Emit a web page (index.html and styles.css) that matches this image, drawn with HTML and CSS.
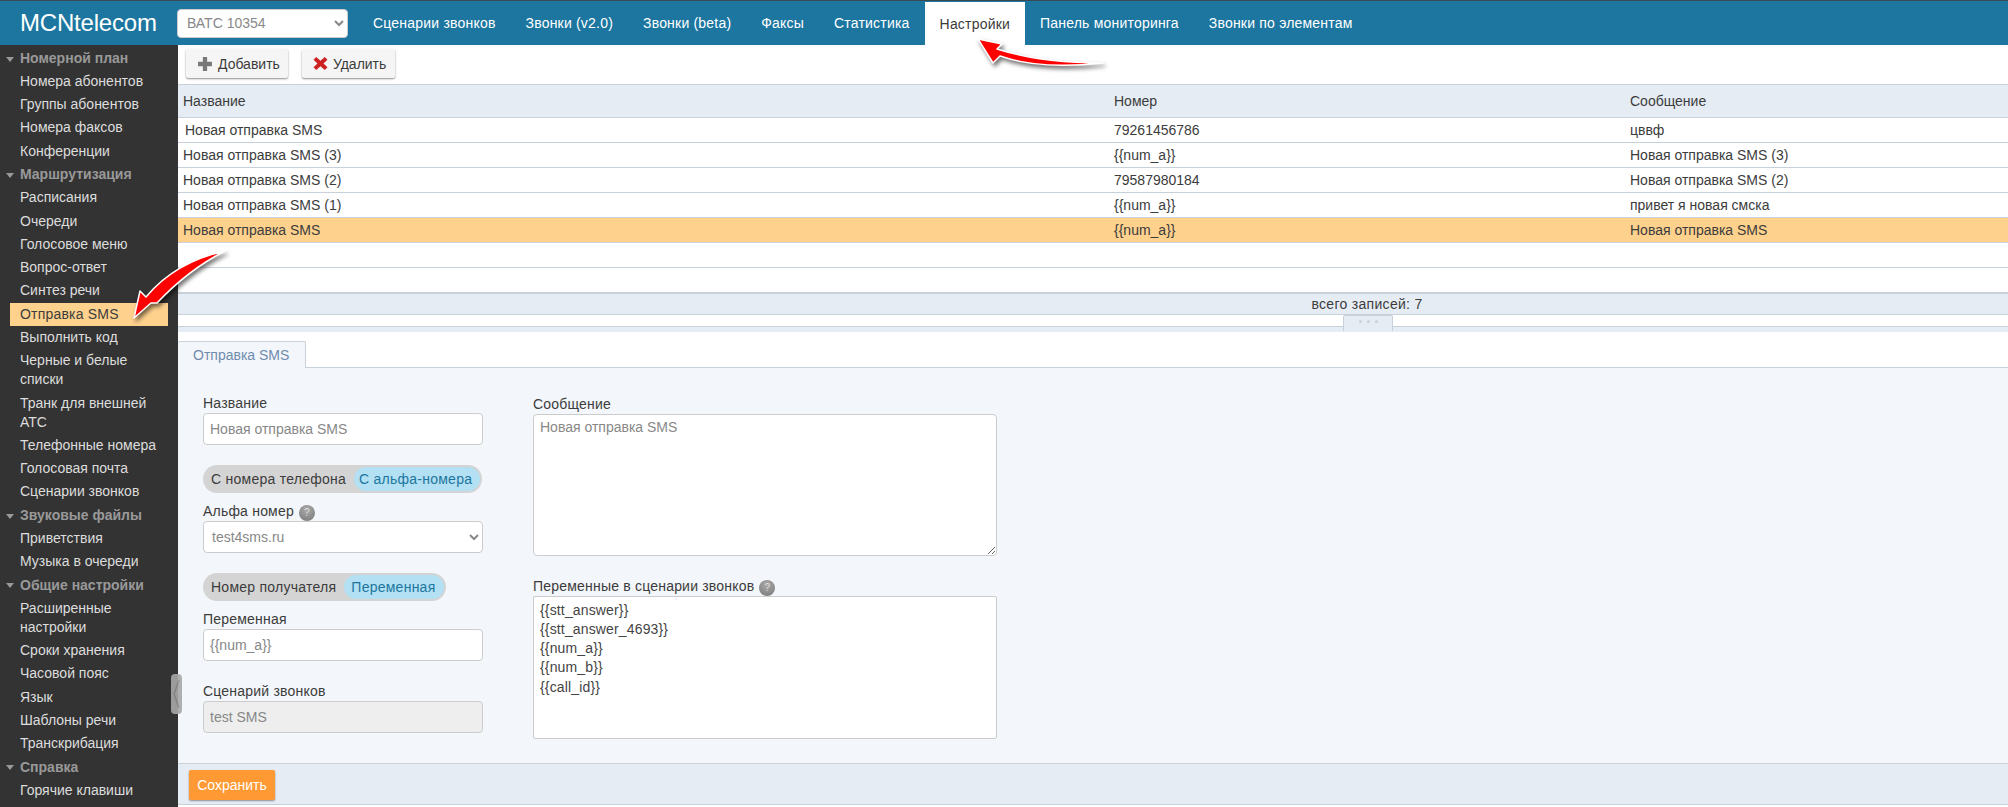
FILE: index.html
```html
<!DOCTYPE html>
<html lang="en">
<head>
    <meta charset="UTF-8">
    <meta name="viewport" content="width=device-width, initial-scale=1.0">
    <title>MCNtelecom</title>
    <link rel="stylesheet" href="styles.css">
</head>
<body>
    <header class="topbar">
        <div class="logo">MCNtelecom</div>
        <select class="account-select">
            <option>ВАТС 10354</option>
        </select>
        <nav class="topnav">
            <a class="topnav-item">Сценарии звонков</a>
            <a class="topnav-item">Звонки (v2.0)</a>
            <a class="topnav-item">Звонки (beta)</a>
            <a class="topnav-item">Факсы</a>
            <a class="topnav-item">Статистика</a>
            <a class="topnav-item active">Настройки</a>
            <a class="topnav-item">Панель мониторинга</a>
            <a class="topnav-item">Звонки по элементам</a>
        </nav>
    </header>

    <div class="main">
        <aside class="sidebar">
            <div class="side-group">Номерной план</div>
            <a class="side-item">Номера абонентов</a>
            <a class="side-item">Группы абонентов</a>
            <a class="side-item">Номера факсов</a>
            <a class="side-item">Конференции</a>
            <div class="side-group">Маршрутизация</div>
            <a class="side-item">Расписания</a>
            <a class="side-item">Очереди</a>
            <a class="side-item">Голосовое меню</a>
            <a class="side-item">Вопрос-ответ</a>
            <a class="side-item">Синтез речи</a>
            <a class="side-item selected">Отправка SMS</a>
            <a class="side-item">Выполнить код</a>
            <a class="side-item">Черные и белые списки</a>
            <a class="side-item">Транк для внешней АТС</a>
            <a class="side-item">Телефонные номера</a>
            <a class="side-item">Голосовая почта</a>
            <a class="side-item">Сценарии звонков</a>
            <div class="side-group">Звуковые файлы</div>
            <a class="side-item">Приветствия</a>
            <a class="side-item">Музыка в очереди</a>
            <div class="side-group">Общие настройки</div>
            <a class="side-item">Расширенные настройки</a>
            <a class="side-item">Сроки хранения</a>
            <a class="side-item">Часовой пояс</a>
            <a class="side-item">Язык</a>
            <a class="side-item">Шаблоны речи</a>
            <a class="side-item">Транскрибация</a>
            <div class="side-group">Справка</div>
            <a class="side-item">Горячие клавиши</a>
        </aside>

        <div class="collapse-handle">
            <svg width="11" height="40" viewBox="0 0 11 40">
                <path d="M8 6 L3 20 L8 34" fill="none" stroke="#8d8d8d" stroke-width="1.5"/>
            </svg>
        </div>

        <section class="content">
            <div class="toolbar">
                <button class="tool-btn add-btn">
                    <svg width="16" height="16" viewBox="0 0 15 15">
                        <path d="M5.5 1h4v4.500H14v4H9.500V14h-4V9.500H1v-4h4.500z" fill="#777"/>
                    </svg>
                    Добавить
                </button>
                <button class="tool-btn">
                    <svg width="15" height="15" viewBox="0 0 14 14">
                        <path d="M3 1 L7 4.500 L11 1 L13.500 3.500 L9.800 7 L13.500 10.500 L11 13 L7 9.500 L3 13 L0.500 10.500 L4.200 7 L0.500 3.500z" fill="#cc2222"/>
                    </svg>
                    Удалить
                </button>
            </div>

            <table class="grid">
                <thead>
                    <tr>
                        <th class="col-name">Название</th>
                        <th class="col-number">Номер</th>
                        <th>Сообщение</th>
                    </tr>
                </thead>
                <tbody>
                    <tr><td class="first-name">Новая отправка SMS</td><td>79261456786</td><td>цввф</td></tr>
                    <tr><td>Новая отправка SMS (3)</td><td>{{num_a}}</td><td>Новая отправка SMS (3)</td></tr>
                    <tr><td>Новая отправка SMS (2)</td><td>79587980184</td><td>Новая отправка SMS (2)</td></tr>
                    <tr><td>Новая отправка SMS (1)</td><td>{{num_a}}</td><td>привет я новая смска</td></tr>
                    <tr class="current"><td>Новая отправка SMS</td><td>{{num_a}}</td><td>Новая отправка SMS</td></tr>
                    <tr><td></td><td></td><td></td></tr>
                    <tr class="last"><td></td><td></td><td></td></tr>
                </tbody>
            </table>

            <div class="grid-footer">всего записей: 7</div>

            <div class="splitter">
                <div class="splitter-grip"><span></span><span></span><span></span></div>
            </div>

            <div class="tabs">
                <div class="tab">Отправка SMS</div>
            </div>

            <div class="detail">
                <div class="form-col left-col">
                    <label class="field-label">Название</label>
                    <input class="field" type="text" value="Новая отправка SMS">

                    <div class="toggle first-toggle">
                        <span class="toggle-off">С номера телефона</span>
                        <span class="toggle-on">С альфа-номера</span>
                    </div>
                    <label class="field-label">Альфа номер <i class="help">?</i></label>
                    <select class="field select-field">
                        <option>test4sms.ru</option>
                    </select>

                    <div class="toggle second-toggle">
                        <span class="toggle-off">Номер получателя</span>
                        <span class="toggle-on">Переменная</span>
                    </div>
                    <label class="field-label">Переменная</label>
                    <input class="field" type="text" value="{{num_a}}">

                    <label class="field-label spaced">Сценарий звонков</label>
                    <input class="field" type="text" value="test SMS" disabled>
                </div>

                <div class="form-col right-col">
                    <label class="field-label">Сообщение</label>
                    <textarea class="field message">Новая отправка SMS</textarea>
                    <label class="field-label spaced">Переменные в сценарии звонков <i class="help">?</i></label>
                    <textarea class="field variables">{{stt_answer}}
{{stt_answer_4693}}
{{num_a}}
{{num_b}}
{{call_id}}</textarea>
                </div>
            </div>

            <div class="form-footer">
                <button class="save-btn">Сохранить</button>
            </div>
        </section>
    </div>

    <!-- red callout arrows -->
    <svg class="callouts" width="2008" height="807" viewBox="0 0 2008 807">
        <path d="M978 39 L1002 44 L997 49 Q1040 63 1103 63 Q1040 70 1000 56 L993 63 Z"/>
        <path d="M134 318 L140 291 L146 297 Q175 262 225 251 Q188 270 157 303 L151 303 Z"/>
    </svg>
</body>
</html>
```

FILE: styles.css
```css
* {
    box-sizing: border-box;
}
html, body {
    height: 100%;
}
body {
    margin: 0;
    padding: 0;
    overflow: hidden;
    font-family: "Liberation Sans", Arial, sans-serif;
    font-size: 14px;
    color: #3c3c3c;
    background-color: #fff;
}

/* Top bar */
.topbar {
    display: flex;
    align-items: center;
    height: 45px;
    padding-left: 20px;
    background-color: #1c76a0;
    border-top: 1px solid #3b4a52;
}
.logo {
    width: 157px;
    font-size: 24px;
    color: #fff;
    letter-spacing: -0.2px;
}
.account-select {
    width: 171px;
    height: 29px;
    padding-left: 5px;
    margin-right: 10px;
    font-family: inherit;
    font-size: 14px;
    color: #888;
    background-color: #fff;
    border: 1px solid #ccc;
    border-radius: 4px;
}
.topnav {
    display: flex;
    align-self: stretch;
}
.topnav-item {
    display: flex;
    align-items: center;
    padding: 0 15px;
    color: #fff;
    letter-spacing: 0.2px;
}
.topnav-item.active {
    margin-top: 1px;
    color: #3c3c3c;
    background-color: #fff;
}

/* Layout */
.main {
    position: relative;
    display: flex;
    height: 762px;
}
.sidebar {
    width: 178px;
    flex-shrink: 0;
    padding-top: 1.500px;
    background-color: #333;
    overflow: hidden;
}
.side-group {
    position: relative;
    padding: 2.150px 0 2.150px 20px;
    line-height: 19px;
    font-weight: bold;
    color: #999;
}
.side-group::before {
    content: "";
    position: absolute;
    left: 6px;
    top: 10px;
    border-left: 4px solid transparent;
    border-right: 4px solid transparent;
    border-top: 5px solid #999;
}
.side-item {
    display: block;
    margin: 0 10px;
    padding: 2.150px 0 2.150px 10px;
    line-height: 19px;
    color: #ddd;
}
.side-item.selected {
    letter-spacing: 0.2px;
    color: #3c3c3c;
    background-color: #fed18d;
}
.collapse-handle {
    position: absolute;
    left: 171px;
    top: 629px;
    width: 11px;
    height: 40px;
    background-color: #a8a8a8;
    border-radius: 4px;
    opacity: 0.9;
}
.collapse-handle svg {
    display: block;
}

/* Content */
.content {
    flex: 1;
    min-width: 0;
}
.toolbar {
    display: flex;
    gap: 14px;
    height: 39px;
    padding: 4px 0 0 8px;
}
.tool-btn {
    display: flex;
    align-items: center;
    gap: 5px;
    height: 29px;
    padding: 0 9px 0 11px;
    font-family: inherit;
    font-size: 14px;
    color: #3c3c3c;
    background-color: #f5f5f5;
    border: none;
    border-radius: 2px;
    box-shadow: 0 1px 2px rgba(0, 0, 0, 0.45);
}
.add-btn {
    padding-right: 8px;
}

/* Grid */
.grid {
    width: 100%;
    table-layout: fixed;
    border-collapse: collapse;
}
.grid th {
    height: 33px;
    padding: 0 5px;
    font-weight: normal;
    text-align: left;
    background-color: #e6ecf4;
    border-top: 1px solid #c8d0da;
    border-bottom: 1px solid #c8d0da;
}
.grid td {
    height: 25px;
    padding: 0 5px;
    border-bottom: 1px solid #c8d0da;
}
.grid .first-name {
    padding-left: 7px;
}
.col-name {
    width: 931px;
}
.col-number {
    width: 516px;
}
.grid .current td {
    background-color: #fed18d;
}
.grid .last td {
    border-bottom: 2px solid #c8d0da;
}
.grid-footer {
    height: 21px;
    line-height: 21px;
    padding-left: 548px;
    text-align: center;
    letter-spacing: 0.3px;
    background-color: #e6ecf4;
    border-bottom: 1px solid #c8d0da;
}
.splitter {
    position: relative;
    height: 16px;
    border-bottom: 1px solid #c8d0da;
}
.splitter::before {
    content: "";
    display: block;
    height: 5px;
    margin-top: 11px;
    background-color: #e6ecf4;
    border-top: 1px solid #c8d0da;
    float: left;
    width: 100%;
}
.splitter-grip {
    position: absolute;
    left: 1165px;
    top: 0;
    display: flex;
    align-items: center;
    justify-content: center;
    gap: 5px;
    width: 50px;
    height: 16px;
    padding-bottom: 3px;
    background-color: #e6ecf4;
    border: 1px solid #c8d0da;
    border-bottom: none;
    border-radius: 2px 2px 0 0;
}
.splitter-grip span {
    width: 3px;
    height: 3px;
    background-color: #c8d0da;
    border-radius: 50%;
}

/* Tabs */
.tabs {
    height: 37px;
    padding-top: 10px;
    border-bottom: 1px solid #c8d0da;
}
.tab {
    width: 128px;
    height: 27px;
    line-height: 26px;
    padding-left: 15px;
    color: #6f8cae;
    background-color: #f3f6fa;
    border: 1px solid #c8d0da;
    border-bottom: none;
    border-left: none;
    border-radius: 2px 2px 0 0;
}

/* Form */
.detail {
    display: flex;
    gap: 50px;
    height: 395px;
    padding: 25px 0 0 25px;
    background-color: #f3f6fa;
}
.left-col {
    width: 280px;
}
.right-col {
    width: 464px;
    padding-top: 1px;
}
.field-label {
    display: block;
    height: 20px;
    line-height: 20px;
    letter-spacing: 0.2px;
    color: #3c3c3c;
}
.field-label.spaced {
    margin-top: 20px;
}
.field {
    display: block;
    width: 100%;
    height: 32px;
    padding: 0 6px;
    font-family: inherit;
    font-size: 14px;
    color: #888;
    background-color: #fff;
    border: 1px solid #ccc;
    border-radius: 4px;
}
.select-field {
    padding-left: 4px;
}
input.field:disabled {
    background-color: #eee;
}
.message {
    height: 142px;
    padding: 4px 6px;
}
.variables {
    height: 143px;
    padding: 4px 6px;
    line-height: 19.300px;
    letter-spacing: 0.15px;
    color: #444;
    border-radius: 2px;
    resize: none;
}
.toggle {
    display: flex;
    align-items: center;
    height: 28px;
    margin-top: 20px;
    margin-bottom: 8px;
    padding: 2px;
    letter-spacing: 0.25px;
    background-color: #d4d4d4;
    border-radius: 14px;
}
.first-toggle {
    width: 279px;
}
.first-toggle .toggle-on {
    padding-left: 5px;
}
.second-toggle {
    width: 243px;
}
.toggle-off {
    padding: 0 8px 0 6px;
}
.toggle-on {
    flex: 1;
    height: 24px;
    line-height: 24px;
    padding-left: 7px;
    color: #1c76a0;
    background-color: #b3e0f2;
    border-radius: 12px;
}
.help {
    display: inline-block;
    width: 16px;
    height: 16px;
    line-height: 16px;
    margin-left: 1px;
    font-size: 10px;
    font-style: normal;
    text-align: center;
    color: #ddd;
    background: radial-gradient(circle at 50% 30%, #aaa, #777);
    border-radius: 50%;
}
.form-footer {
    height: 42px;
    padding: 6px 0 0 11px;
    background-color: #e6ecf4;
    border-top: 1px solid #c8d0da;
    border-bottom: 1px solid #c8d0da;
}
.save-btn {
    width: 86px;
    height: 30px;
    padding: 0;
    font-family: inherit;
    font-size: 14px;
    color: #fff;
    background-color: #ff9933;
    border: none;
    border-radius: 2px;
    box-shadow: 0 1px 2px rgba(0, 0, 0, 0.4);
}

/* Callouts */
.callouts {
    position: absolute;
    left: 0;
    top: 0;
    pointer-events: none;
    filter: drop-shadow(2px 3px 2px rgba(0, 0, 0, 0.55));
}
.callouts path {
    fill: #f00;
    stroke: #fff;
    stroke-width: 1.500px;
    stroke-linejoin: round;
}
```
